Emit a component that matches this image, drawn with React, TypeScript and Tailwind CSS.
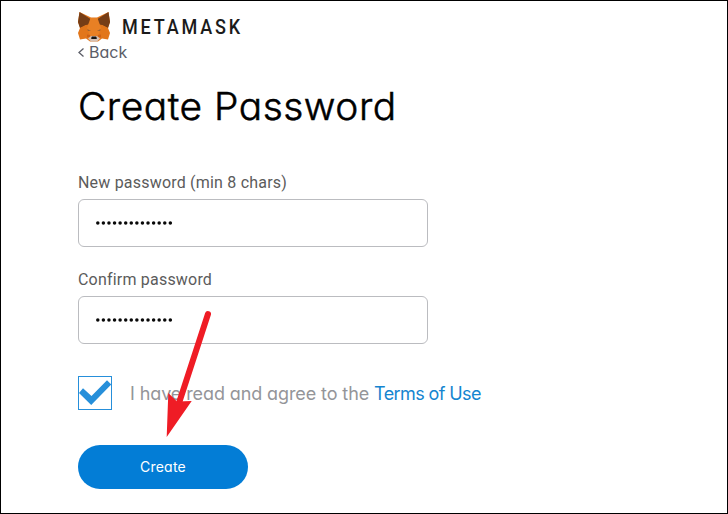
import React from "react";

const GEO = "font-['Inter',sans-serif] [font-feature-settings:'cv11']";

function Fox() {
  return (
    <svg className="h-[30px] w-8 shrink-0" viewBox="0 0 32 30">
      <path fill="#e2761b" d="M1.500 0 13 5.500h6L30.500 0 32 10l-2 6 2 5-2 6.500-6-1-4 3h-8l-4-3-6 1-2-6.500 2-5-2-6z" />
      <path fill="#763d16" d="M1.500 0 12.500 7l.5 5.500-5 .5-6 3-2-6z" />
      <path fill="#763d16" d="M30.500 0 19.500 7l-.5 5.500 5 .5 6 3 2-6z" />
      <path fill="#e2761b" d="m2 16 6-3 4-.500-3 6zM30 16l-6-3-4-.500 3 6z" />
      <path fill="#e88024" d="M12.500 6h7l3.500 10-3 8h-8l-3-8z" />
      <path fill="#cd6116" d="m9 22.500 3 .500.500 1.500-3.500 1zM23 22.500l-3 .500-.500 1.500 3.500 1z" />
      <path fill="#6a5040" d="m9.500 17.300 3.500 1.700-3.200-.4zM22.500 17.300l-3.500 1.700 3.200-.4z" />
      <path fill="#d7c1b3" d="m10 26.500 3-2.500h6l3 2.500-3 3h-6z" />
      <path fill="#161616" d="m13.500 25 .5-.500h4l.5.500.3 2h-5.600z" />
    </svg>
  );
}

function PasswordField({ label }: { label: string }) {
  return (
    <div>
      <label className="block h-6 whitespace-nowrap font-['Roboto',sans-serif] text-base leading-[26px] tracking-[0.2px] text-[#5b5b5b]">
        {label}
      </label>
      <div className="mt-[5px] flex h-12 w-[350px] items-center rounded-[6px] border border-[#bbbcc0] bg-white pl-4">
        <svg className="h-[5px] w-20" viewBox="0 0 80 5">
          {Array.from({ length: 14 }, (_, i) => (
            <circle key={i} cx={2.8 + i * 5.58} cy="2" r="1.75" fill="#080808" />
          ))}
        </svg>
      </div>
    </div>
  );
}

export default function App() {
  return (
    <main className="relative h-[514px] w-[728px] overflow-hidden border border-black bg-white pl-[77px] pt-[11px]">
      <header className="flex h-[30px] items-center">
        <Fox />
        <span className="ml-3 origin-left scale-x-[0.858] font-['Roboto',sans-serif] text-[21px] font-medium leading-[30px] tracking-[3.300px] text-[#1b1b1b]">
          METAMASK
        </span>
      </header>
      <a className={`-mt-0.5 flex h-6 items-center text-base leading-6 text-[#5b5d67] ${GEO}`}>
        <svg className="mr-[5px] h-[9px] w-[6px]" viewBox="0 0 6 9" fill="none" stroke="currentColor" strokeWidth="1.3">
          <path d="M5.500.500 1 4.500l4.500 4" />
        </svg>
        Back
      </a>
      <h1 className={`mt-[17px] h-[52px] origin-left scale-x-[1.037] whitespace-nowrap text-[37.500px] font-light leading-[51px] tracking-[0.500px] text-black [-webkit-text-stroke:0.500px_black] ${GEO}`}>
        Create Password
      </h1>
      <div className="mt-[37px] flex flex-col gap-5">
        <PasswordField label="New password (min 8 chars)" />
        <PasswordField label="Confirm password" />
      </div>
      <div className="mt-8 flex h-[34px] items-center">
        <div className="h-[34px] w-[34px] border border-[#268fda]">
          <svg className="h-8 w-8" viewBox="79 377 32 32">
            <path fill="#268fda" d="m79 393 4-4.700 8.500 7.800 15.500-15.900 4.200 4.300L91.200 405z" />
          </svg>
        </div>
        <p className={`ml-[18px] whitespace-nowrap pt-0.5 text-[18px] leading-6 tracking-[-0.1px] text-[#949599] ${GEO}`}>
          I have read and agree to the <a className="tracking-[-0.600px] text-[#1585d0]">Terms of Use</a>
        </p>
      </div>
      <button className={`mt-[35px] flex h-11 w-[170px] items-center justify-center rounded-full bg-[#037dd6] text-sm tracking-[0.2px] text-white ${GEO}`}>
        Create
      </button>
      <svg className="absolute left-[159px] top-[304px] h-[136px] w-[60px]" viewBox="160 305 60 136">
        <path d="M208 314 179 403" stroke="#ef1c25" strokeWidth="6" strokeLinecap="round" />
        <path fill="#ef1c25" d="m168.300 393 8.700 8.500 14.700-.5-25 36z" />
      </svg>
    </main>
  );
}
